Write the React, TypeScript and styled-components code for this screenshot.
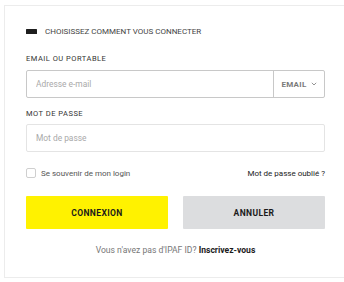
import styled, { createGlobalStyle } from 'styled-components'

const Global = createGlobalStyle`
  body {
    margin: 0;
    background: #fff;
    font-family: Roboto, "Liberation Sans", sans-serif;
    overflow: hidden;
  }
`

const S_page = styled.div`
  padding: 5px 0 0 4px;
`
const S_card = styled.div`
  width: 343px;
  box-sizing: border-box;
  border: solid 1px #ececec;
  padding: 20px 21px 22px 21px;
  display: flex;
  flex-direction: column;
`
const S_head = styled.div`
  display: flex;
  align-items: center;
  gap: 8px;
  height: 10px;
  font-size: 8px;
  color: #444;
`
const S_mark = styled.span`
  width: 11px;
  height: 5px;
  background: #1e1e1e;
  border-radius: 0.5px;
`
const S_label = styled.div<{ $top: number }>`
  margin-top: ${({ $top }) => $top}px;
  font-size: 7.5px;
  letter-spacing: 0.5px;
  color: #333;
  height: 10px;
  line-height: 10px;
`
const S_field = styled.div<{ $strong?: boolean }>`
  margin-top: ${({ $strong }) => ($strong ? 6 : 5)}px;
  height: 28px;
  box-sizing: border-box;
  border: solid 1px ${({ $strong }) => ($strong ? '#c8c8c8' : '#e4e4e4')};
  border-radius: 2px;
  display: flex;
  align-items: stretch;
`
const S_input = styled.input`
  flex: 1;
  min-width: 0;
  border: none;
  outline: none;
  background: transparent;
  padding: 0 9px;
  font-family: inherit;
  font-size: 8.4px;
  color: #333;
  &::placeholder { color: #a9a9a9; }
`
const S_select = styled.div`
  width: 50px;
  border-left: solid 1px #c8c8c8;
  display: flex;
  align-items: center;
  justify-content: center;
  gap: 4px;
  font-size: 8px;
  font-weight: 700;
  color: #7a7a7a;
  letter-spacing: 0.3px;
`
const S_row = styled.div`
  margin-top: 16px;
  display: flex;
  justify-content: space-between;
  align-items: center;
  height: 10px;
`
const S_check = styled.label`
  display: flex;
  align-items: center;
  gap: 5px;
  font-size: 8px;
  color: #555;
`
const S_box = styled.span`
  width: 8px;
  height: 8px;
  border: solid 1px #cfcfcf;
  border-radius: 2px;
`
const S_link = styled.a`
  font-size: 8px;
  color: #222;
  text-decoration: none;
`
const S_buttons = styled.div`
  margin-top: 18px;
  display: grid;
  grid-template-columns: 1fr 1fr;
  gap: 15px;
`
const S_btn = styled.button<{ $primary?: boolean }>`
  height: 33px;
  border: none;
  border-radius: 1px;
  background: ${({ $primary }) => ($primary ? '#fff200' : '#dcdddf')};
  font-family: inherit;
  font-size: 8.5px;
  font-weight: 700;
  letter-spacing: 0.4px;
  color: #1b1b1b;
`
const S_foot = styled.p`
  margin: 16px 0 0 0;
  text-align: center;
  font-size: 8.6px;
  line-height: 10px;
  color: #777;
  b { color: #1b1b1b; }
`

const App = () => {
  return (
    <>
      <Global />
      <S_page>
        <S_card>
          <S_head>
            <S_mark />
            CHOISISSEZ COMMENT VOUS CONNECTER
          </S_head>

          <S_label $top={18}>EMAIL OU PORTABLE</S_label>
          <S_field $strong>
            <S_input placeholder="Adresse e-mail" />
            <S_select>
              EMAIL
              <svg width="6" height="4" viewBox="0 0 6 4">
                <path d="M0.8 0.8 L3 3 L5.2 0.8" fill="none" stroke="#888" strokeWidth="0.9" />
              </svg>
            </S_select>
          </S_field>

          <S_label $top={11}>MOT DE PASSE</S_label>
          <S_field>
            <S_input type="password" placeholder="Mot de passe" />
          </S_field>

          <S_row>
            <S_check>
              <S_box />
              Se souvenir de mon login
            </S_check>
            <S_link href="#">Mot de passe oublié ?</S_link>
          </S_row>

          <S_buttons>
            <S_btn $primary>CONNEXION</S_btn>
            <S_btn>ANNULER</S_btn>
          </S_buttons>

          <S_foot>
            Vous n'avez pas d'IPAF ID? <b>Inscrivez-vous</b>
          </S_foot>
        </S_card>
      </S_page>
    </>
  )
}

export default App
